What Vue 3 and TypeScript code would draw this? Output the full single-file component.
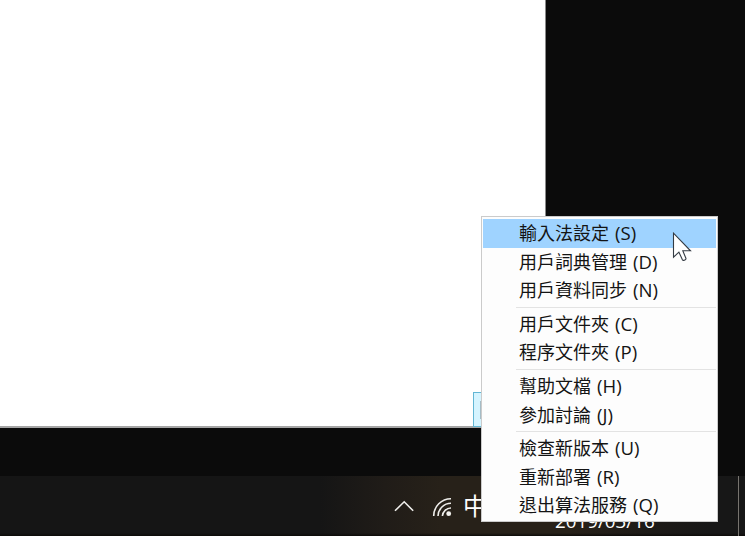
<script setup lang="ts">
interface MenuItem {
  label: string
  key: string
  active?: boolean
}

const groups: MenuItem[][] = [
  [
    { label: '輸入法設定', key: 'S', active: true },
    { label: '用戶詞典管理', key: 'D' },
    { label: '用戶資料同步', key: 'N' },
  ],
  [
    { label: '用戶文件夾', key: 'C' },
    { label: '程序文件夾', key: 'P' },
  ],
  [
    { label: '幫助文檔', key: 'H' },
    { label: '參加討論', key: 'J' },
  ],
  [
    { label: '檢查新版本', key: 'U' },
    { label: '重新部署', key: 'R' },
    { label: '退出算法服務', key: 'Q' },
  ],
]
</script>

<template>
  <main class="screen">
    <div class="desktop">
      <section class="window">
        <div class="selection"><div class="selection-inner"></div></div>
      </section>
    </div>

    <footer class="taskbar">
      <div class="tray">
        <svg class="chevron" viewBox="0 0 20 12" width="20" height="12">
          <path d="M1 10.8 10.2 1.8 19.2 10.8" />
        </svg>
        <svg class="network" viewBox="0 0 20 20" width="20" height="20">
          <path d="M1.7 19A17.3 17.3 0 0 1 19 1.7" />
          <path d="M6 19A13 13 0 0 1 19 6.3" />
          <path d="M10.4 19A8.6 8.6 0 0 1 19 11" />
          <circle cx="16.7" cy="16.7" r="2.4" />
        </svg>
        <span class="ime">中</span>
      </div>
      <span class="date">2019/03/16</span>
      <div class="show-desktop"></div>
    </footer>

    <nav class="menu">
      <ul v-for="(group, index) in groups" :key="index" class="group">
        <li v-for="item in group" :key="item.key" class="item" :class="{ active: item.active }">
          {{ item.label }} <span class="key">({{ item.key }})</span>
        </li>
      </ul>
    </nav>

    <svg class="cursor" viewBox="0 0 22 32" width="22" height="32">
      <path d="M1.5 1.2V25.2L6.9 20.1L10.3 27.6Q11 28.8 12.3 28.2L13.3 27.7Q14.3 27.2 13.8 26L10.8 18.8H18.5Z" />
    </svg>
  </main>
</template>

<style>
body {
  margin: 0;
  background: #0b0b0b;
}
</style>

<style scoped>
.screen {
  position: relative;
  display: flex;
  flex-direction: column;
  width: 745px;
  height: 536px;
  overflow: hidden;
  background: #0b0b0b;
  font-family: "Open Sans", "Noto Sans CJK TC", sans-serif;
}

.desktop {
  flex: 1;
}

.window {
  display: flex;
  align-items: flex-end;
  justify-content: flex-end;
  box-sizing: border-box;
  width: 546px;
  height: 428px;
  border-right: 1px solid #8a8a8a;
  border-bottom: 2px solid #a5a5a5;
  background: #fff;
}

.selection {
  display: flex;
  align-items: center;
  box-sizing: border-box;
  width: 72px;
  height: 35px;
  margin-bottom: -1px;
  padding-left: 6px;
  border: 1px solid #62b6d4;
  background: #d5f4ff;
}

.selection-inner {
  width: 20px;
  height: 18px;
  border-left: 1px solid #a5bcc6;
}

.taskbar {
  position: relative;
  display: flex;
  height: 60px;
  background:
    linear-gradient(transparent 57px, #0d0b09 60px),
    linear-gradient(90deg, #151515 320px, #201c18 385px, #272119 440px, #272119 570px, #1d1a17 650px, #171717 710px);
  color: #fff;
}

.tray {
  display: flex;
  align-items: flex-start;
  width: 540px;
  box-sizing: border-box;
  padding-left: 394px;
}

.tray svg {
  flex: none;
  fill: none;
  stroke: #efeeeb;
  stroke-width: 1.6;
}

.chevron {
  margin-top: 24px;
}

.tray .network {
  margin: 21px 0 0 18px;
}

.network circle {
  fill: #f3f2ef;
  stroke: none;
}

.ime {
  margin: 18px 0 0 11px;
  font-family: "Noto Sans CJK TC", sans-serif;
  font-size: 24px;
  font-weight: 400;
  line-height: 22px;
}

.date {
  position: absolute;
  left: 555px;
  top: 32px;
  font-size: 18.8px;
  line-height: 26px;
}

.show-desktop {
  margin-left: auto;
  width: 6px;
  border-left: 1px solid #77746f;
}

.menu {
  position: absolute;
  left: 481px;
  top: 216px;
  box-sizing: border-box;
  width: 237px;
  height: 306px;
  padding: 2px 1px;
  border: 1px solid #cbcbcb;
  background: #fdfdfd;
  color: #141414;
}

.group {
  margin: 0;
  padding: 0;
  list-style: none;
}

.group + .group::before {
  display: block;
  height: 1px;
  margin: 2.2px 0 2.1px 33px;
  background: #e3e3e3;
  content: "";
}

.item {
  height: 28.5px;
  padding-left: 36px;
  font-size: 18px;
  line-height: 28px;
  white-space: nowrap;
}

.active {
  background: #9fd3ff;
}

.key {
  margin-left: 1.3px;
  font-size: 18.6px;
}

.cursor {
  position: absolute;
  left: 672px;
  top: 232px;
  fill: #fff;
  stroke: #343b43;
  stroke-width: 1.1;
}
</style>
